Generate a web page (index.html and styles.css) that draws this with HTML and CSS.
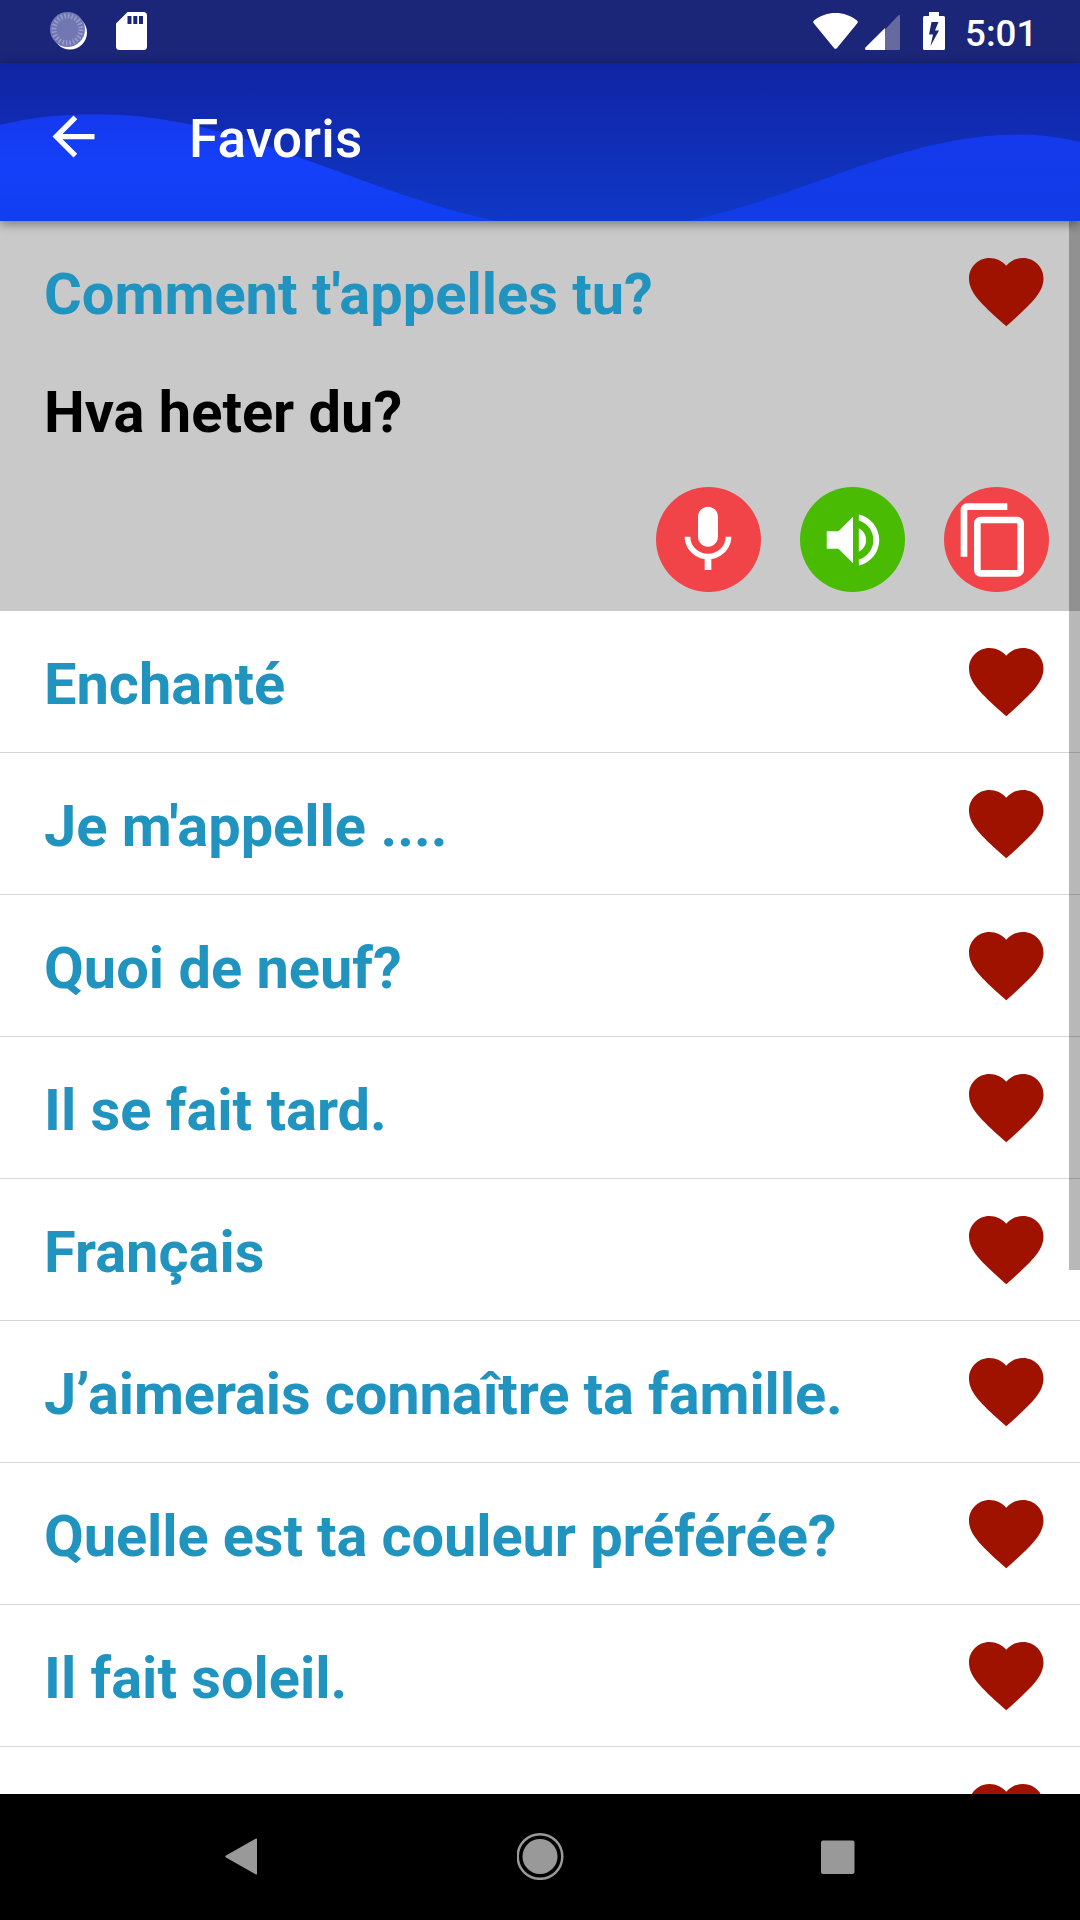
FILE: index.html
```html
<!DOCTYPE html>
<html lang="fr">
<head>
<meta charset="utf-8">
<title>Favoris</title>
<link rel="stylesheet" href="styles.css">
</head>
<body>
<svg class="defs" width="0" height="0">
  <symbol id="heart" viewBox="2 3 20 18.35" overflow="visible"><path d="M12 21.35l-1.45-1.32C5.4 15.36 2 12.28 2 8.5 2 5.42 4.42 3 7.5 3c1.74 0 3.41.81 4.5 2.09C13.09 3.81 14.76 3 16.5 3 19.58 3 22 5.42 22 8.5c0 3.78-3.4 6.86-8.55 11.54L12 21.35z"/></symbol>
</svg>
<div class="screen">
  <header class="status-bar">
    <div class="status-left">
      <svg class="sync" viewBox="0 0 38 38"><circle cx="20" cy="20.5" r="17" fill="#fff"/><circle cx="17.5" cy="17.500" r="17.500" fill="#7077b3"/><circle cx="17.500" cy="17.500" r="13.500" fill="none" stroke="#9a9eca" stroke-width="5" stroke-dasharray="1.500 2.034"/></svg>
      <svg class="sd" viewBox="0 0 31 38"><path fill="#fff" fill-rule="evenodd" d="M11.500 0H27.500a3.500 3.500 0 0 1 3.500 3.500V34.500a3.500 3.500 0 0 1-3.500 3.500H3.500A3.500 3.500 0 0 1 0 34.500V11.500zM11.500 4v8h4V4zM17.300 4v8h4V4zM23 4v8h4V4z"/></svg>
    </div>
    <div class="status-right">
      <svg class="wifi" viewBox="0 0 45 36"><path fill="#fff" d="M1 7.500C13-2.500 32-2.500 44 7.500q1.500 1.200.3 2.700L24 35q-1.500 1.700-3 0L.7 10.200Q-.5 8.700 1 7.500z"/></svg>
      <svg class="signal" viewBox="0 0 35 35"><path fill="#666b9f" d="M20 14.500L33 .700Q35-.8 35 1.500V33.500q0 1.500-1.500 1.500H20z"/><path fill="#fff" d="M20 13V35H1.500Q-1 35 .700 32.300z"/></svg>
      <svg class="battery" viewBox="0 0 22 38"><path fill="#fff" fill-rule="evenodd" d="M6 0H16V4H20.500Q22 4 22 5.500V36.500Q22 38 20.500 38H1.500Q0 38 0 36.500V5.500Q0 4 1.500 4H6zM8.500 10L6 22.500H10L7.500 34 16 18.500H12L15.500 10z"/></svg>
      <span class="clock">5:01</span>
    </div>
  </header>

  <div class="app-bar">
    <svg class="waves" viewBox="0 63 1080 158" preserveAspectRatio="none">
      <defs><linearGradient id="wave" x1="0" y1="0" x2="0" y2="1"><stop offset="0" stop-color="#1539ee"/><stop offset=".5" stop-color="#1540fa"/><stop offset="1" stop-color="#103eef"/></linearGradient>
      <linearGradient id="wave2" x1="0" y1="0" x2="0" y2="1"><stop offset="0" stop-color="#1539ec"/><stop offset="1" stop-color="#113ce6"/></linearGradient></defs>
      <path fill="url(#wave)" d="M0 125C40 115 70 114.500 100 114.500C240 114.500 350 190 500 222H0z"/>
      <path fill="url(#wave2)" d="M683 222C800 199 900 134.500 1020 134.500C1040 134.500 1060 137 1080 142V222z"/>
    </svg>
    <svg class="back" viewBox="0 0 24 24"><path fill="#fff" d="M20 11H7.830l5.590-5.590L12 4l-8 8 8 8 1.410-1.410L7.830 13H20z"/></svg>
    <h1 class="title">Favoris</h1>
  </div>

  <main class="list">
    <section class="item open">
      <div class="row"><span class="phrase">Comment t'appelles tu?</span><svg class="heart"><use href="#heart"/></svg></div>
      <p class="translation">Hva heter du?</p>
      <div class="actions">
        <span class="action red"><svg class="icon-lg mic" viewBox="0 0 24 24"><path d="M12 14c1.660 0 2.990-1.340 2.990-3L15 5c0-1.660-1.340-3-3-3S9 3.340 9 5v6c0 1.660 1.340 3 3 3zm5.300-3c0 3-2.540 5.100-5.300 5.100S6.700 14 6.700 11H5c0 3.410 2.720 6.230 6 6.720V21h2v-3.280c3.280-.48 6-3.300 6-6.720h-1.700z"/></svg></span>
        <span class="action green"><svg class="icon-md" viewBox="0 0 24 24"><path d="M3 9v6h4l5 5V4L7 9H3zm13.500 3c0-1.770-1.020-3.290-2.500-4.030v8.050c1.480-.73 2.500-2.250 2.500-4.020zM14 3.230v2.060c2.890.86 5 3.540 5 6.710s-2.110 5.850-5 6.710v2.060c4.010-.91 7-4.490 7-8.770s-2.990-7.860-7-8.770z"/></svg></span>
        <span class="action red"><svg class="icon-lg copy" viewBox="0 0 24 24"><path d="M16 1H4c-1.100 0-2 .9-2 2v14h2V3h12V1zm3 4H8c-1.100 0-2 .9-2 2v14c0 1.100.9 2 2 2h11c1.100 0 2-.9 2-2V7c0-1.100-.9-2-2-2zm0 16H8V7h11v14z"/></svg></span>
      </div>
    </section>
    <div class="item row"><span class="phrase">Enchanté</span><svg class="heart"><use href="#heart"/></svg></div>
    <div class="item row"><span class="phrase">Je m'appelle ....</span><svg class="heart"><use href="#heart"/></svg></div>
    <div class="item row"><span class="phrase">Quoi de neuf?</span><svg class="heart"><use href="#heart"/></svg></div>
    <div class="item row"><span class="phrase">Il se fait tard.</span><svg class="heart"><use href="#heart"/></svg></div>
    <div class="item row"><span class="phrase">Français</span><svg class="heart"><use href="#heart"/></svg></div>
    <div class="item row"><span class="phrase long">J’aimerais connaître ta famille.</span><svg class="heart"><use href="#heart"/></svg></div>
    <div class="item row"><span class="phrase long">Quelle est ta couleur préférée?</span><svg class="heart"><use href="#heart"/></svg></div>
    <div class="item row"><span class="phrase">Il fait soleil.</span><svg class="heart"><use href="#heart"/></svg></div>
    <div class="item row"><span class="phrase"></span><svg class="heart"><use href="#heart"/></svg></div>
    <div class="scrollbar"></div>
  </main>

  <nav class="nav-bar">
    <svg viewBox="0 0 48 48"><path d="M38 7.500V41.500q0 1.500-1.500.8L7 25.500q-1.500-1 0-2L36.500 6.700q1.500-.7 1.500.8z"/></svg>
    <svg viewBox="0 0 48 48"><circle cx="23" cy="24.500" r="17.500"/><circle cx="23" cy="24.500" r="22.300" class="ring"/></svg>
    <svg viewBox="0 0 48 48"><rect x="7" y="8.500" width="33.500" height="33.500" rx="2"/></svg>
  </nav>
</div>
</body>
</html>
```
FILE: styles.css
```css
* { box-sizing: border-box; }

body {
  margin: 0;
  font-family: Roboto, "Liberation Sans", sans-serif;
  background: #fff;
}

svg { display: block; flex: none; }
.defs { position: absolute; }

.screen {
  width: 1080px;
  height: 1920px;
  display: flex;
  flex-direction: column;
  overflow: hidden;
}

/* System status bar */
.status-bar {
  flex: none;
  height: 63px;
  padding: 12px 48px 0 50px;
  display: flex;
  justify-content: space-between;
  background: #1b2678;
}
.status-left, .status-right { display: flex; }
.sync { width: 38px; height: 38px; }
.sd { width: 31px; height: 38px; margin-left: 28px; }
.wifi { width: 45px; height: 36px; margin-top: 1px; }
.signal { width: 35px; height: 35px; margin: 3px 0 0 7px; }
.battery { width: 22px; height: 38px; margin-left: 23px; }
.clock {
  margin-left: 20px;
  width: 67px;
  white-space: nowrap;
  color: #fff;
  font-size: 36.75px;
  font-weight: 500;
  line-height: 43px;
}

/* App bar */
.app-bar {
  flex: none;
  position: relative;
  z-index: 1;
  height: 158px;
  padding: 0 42px;
  display: flex;
  background: linear-gradient(#1123a4, #0f38c6);
  box-shadow: 0 3px 10px rgba(0, 0, 0, .4);
}
.waves { position: absolute; inset: 0; width: 100%; height: 100%; }
.back { position: relative; width: 63px; height: 63px; margin-top: 42px; }
.title {
  position: relative;
  margin: 45px 0 0 84px;
  color: #fff;
  font-size: 53px;
  font-weight: 500;
  line-height: 62px;
  letter-spacing: .2px;
}

/* Phrase list */
.list {
  flex: 1;
  min-height: 0;
  position: relative;
  overflow: hidden;
  background: #fff;
}
.row {
  height: 142px;
  padding: 0 36.500px 0 44px;
  display: flex;
  justify-content: space-between;
}
.item.row { border-bottom: 1px solid #d6d6d6; }
.open { height: 390px; background: #c9c9c9; }
.phrase {
  color: #2193bf;
  font-size: 57.75px;
  font-weight: 700;
  line-height: 68px;
  margin-top: 39px;
  white-space: nowrap;
}
.long { letter-spacing: -.1px; }
.heart {
  width: 74.500px;
  height: 68.400px;
  margin-top: 36.500px;
  fill: #a01200;
  overflow: visible;
}
.translation {
  margin: 15px 0 0 44px;
  color: #000;
  font-size: 57.75px;
  font-weight: 700;
  line-height: 68px;
}
.actions {
  margin-top: 41px;
  padding-right: 31px;
  display: flex;
  justify-content: flex-end;
  gap: 39px;
}
.action {
  width: 105px;
  height: 105px;
  border-radius: 50%;
  display: flex;
  align-items: center;
  justify-content: center;
  fill: #fff;
}
.red { background: #f04448; }
.green { background: #48bb02; }
.icon-lg { width: 80px; height: 80px; }
.icon-md { width: 70px; height: 70px; }
.mic { margin-right: 1px; }
.copy { margin-right: 5px; }

.scrollbar {
  position: absolute;
  top: 0;
  right: 0;
  width: 11px;
  height: 1049px;
  background: rgba(0, 0, 0, .28);
}

/* System navigation bar */
.nav-bar {
  flex: none;
  height: 126px;
  padding: 38px 218px 0 219px;
  display: flex;
  justify-content: space-between;
  background: #000;
  fill: #999;
}
.nav-bar svg { width: 48px; height: 48px; }
.ring { fill: none; stroke: #999; stroke-width: 2.5; }
```
